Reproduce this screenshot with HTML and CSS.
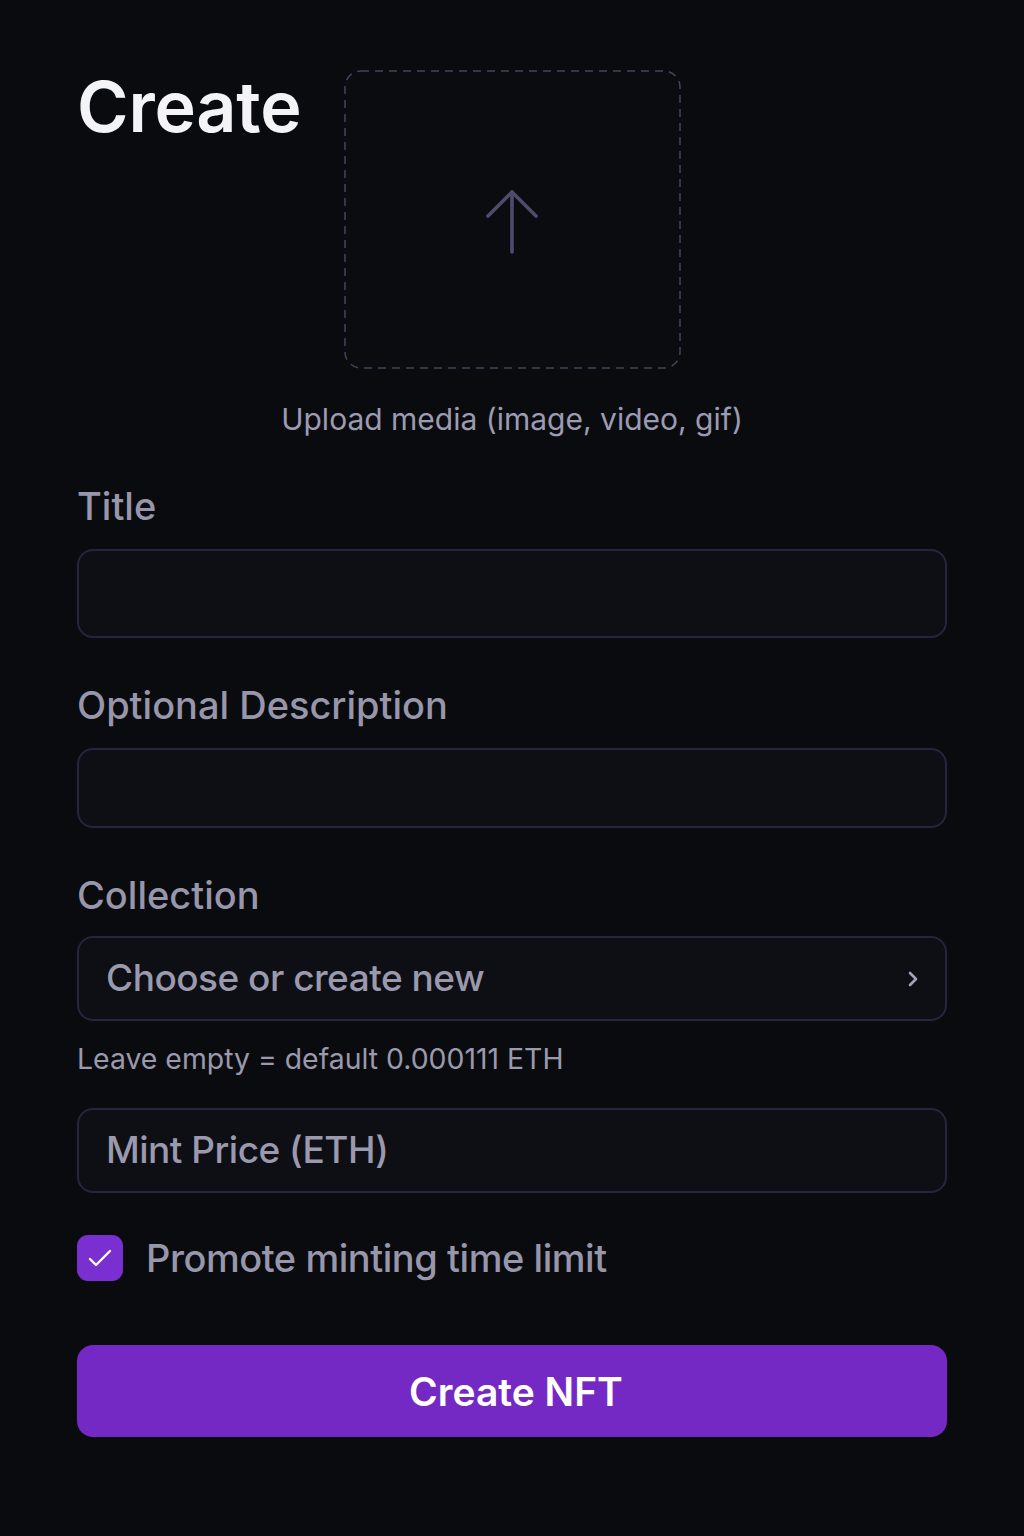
FILE: index.html
```html
<!DOCTYPE html>
<html lang="en">
<head>
<meta charset="utf-8">
<title>Create NFT</title>
<link rel="stylesheet" href="styles.css">
</head>
<body>
<main class="page">
  <header class="top">
    <h1 class="heading">Create</h1>
    <div class="upload">
      <svg class="upload-border" width="337" height="299" viewBox="0 0 337 299" fill="none">
        <rect x="1" y="1" width="335" height="297" rx="16" ry="16" stroke="#44435a" stroke-width="1.5" stroke-dasharray="8 6"/>
      </svg>
      <svg class="upload-icon" width="54" height="66" viewBox="0 0 54 66" fill="none" stroke="#4f4a6e" stroke-width="3.6" stroke-linecap="round" stroke-linejoin="round">
        <path d="M27 3 V63"/>
        <path d="M3 27 L27 3 L51 27"/>
      </svg>
    </div>
  </header>
  <p class="upload-caption">Upload media (image, video, gif)</p>

  <label class="label label-first">Title</label>
  <div class="field field-title"></div>

  <label class="label">Optional Description</label>
  <div class="field field-desc"></div>

  <label class="label">Collection</label>
  <div class="field field-select">
    <span class="placeholder">Choose or create new</span>
    <svg class="chevron" width="12" height="18" viewBox="0 0 12 18" fill="none" stroke="#a3a2b8" stroke-width="2.6" stroke-linecap="round" stroke-linejoin="round">
      <path d="M3 3 L9 9 L3 15"/>
    </svg>
  </div>

  <p class="helper">Leave empty = default 0.000111 ETH</p>
  <div class="field field-mint">
    <span class="placeholder">Mint Price (ETH)</span>
  </div>

  <div class="check-row">
    <span class="checkbox">
      <svg width="24" height="20" viewBox="0 0 24 20" fill="none" stroke="#ffffff" stroke-width="2.4" stroke-linecap="round" stroke-linejoin="round">
        <path d="M2 11 L8 17 L22 3"/>
      </svg>
    </span>
    <span class="check-label">Promote minting time limit</span>
  </div>

  <button class="submit" type="button">Create NFT</button>
</main>
</body>
</html>
```

FILE: styles.css
```css
* { box-sizing: border-box; }

html, body {
  margin: 0;
  padding: 0;
  background: #0a0b0e;
}

body {
  font-family: Inter, "Noto Sans", "Liberation Sans", sans-serif;
  color: #9a99ad;
  min-height: 1536px;
}

.page {
  width: 870px;
  margin: 0 auto;
  padding: 70px 0 80px;
  display: flex;
  flex-direction: column;
}

.top {
  display: grid;
  grid-template-columns: 1fr 337px 1fr;
  align-items: start;
}

.heading {
  margin: 2px 0 0;
  font-size: 70px;
  line-height: 1;
  font-weight: 600;
  color: #f4f4f6;
  letter-spacing: -0.2px;
}

.upload {
  position: relative;
  height: 299px;
  border-radius: 16px;
  background: #0b0c10;
  display: flex;
  align-items: center;
  justify-content: center;
}

.upload-border {
  position: absolute;
  top: 0;
  left: 0;
}

.upload-icon {
  margin-top: 4px;
}

.upload-caption {
  margin: 35px 0 0;
  text-align: center;
  font-size: 30px;
  line-height: 1;
  color: #9c9bb2;
  letter-spacing: 0;
}

.label {
  display: block;
  margin-top: 48px;
  font-size: 38px;
  line-height: 1;
  color: #9796ab;
  font-weight: 500;
  letter-spacing: 0;
}

.label-first {
  margin-top: 53px;
}

.field {
  margin-top: 24px;
  border: 2px solid #27253d;
  border-radius: 16px;
  background: #0e0f14;
  display: flex;
  align-items: center;
  padding: 0 26px 0 27px;
}

.field-title { height: 89px; }
.field-desc { height: 80px; }
.field-select {
  height: 85px;
  margin-top: 22px;
  justify-content: space-between;
}
.field-mint {
  height: 85px;
  margin-top: 35px;
}

.placeholder {
  font-size: 37px;
  color: #9a99ae;
  font-weight: 500;
  letter-spacing: -0.5px;
  padding-bottom: 2px;
}

.helper {
  margin: 24px 0 0;
  font-size: 28.4px;
  line-height: 1;
  color: #9a99ad;
  letter-spacing: 0;
}

.check-row {
  margin-top: 42px;
  display: flex;
  align-items: center;
  gap: 23px;
}

.checkbox {
  width: 46px;
  height: 46px;
  border-radius: 11px;
  background: #7a2fd1;
  display: flex;
  align-items: center;
  justify-content: center;
}

.check-label {
  font-size: 38px;
  line-height: 1;
  color: #9796ab;
  font-weight: 500;
  letter-spacing: -0.45px;
}

.submit {
  margin-top: 64px;
  height: 92px;
  border: none;
  border-radius: 16px;
  background: #7428c4;
  color: #ffffff;
  font-family: inherit;
  font-size: 39px;
  font-weight: 600;
  letter-spacing: 0;
  padding-left: 14px;
  cursor: pointer;
}
```
